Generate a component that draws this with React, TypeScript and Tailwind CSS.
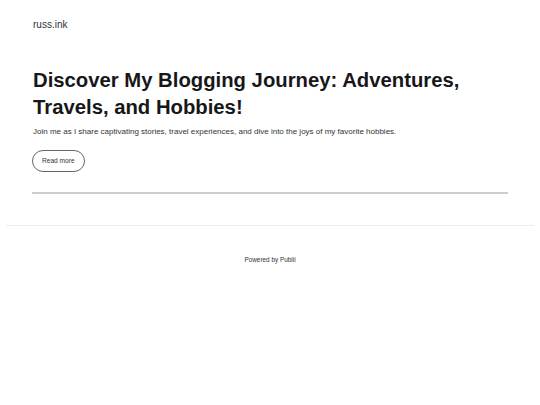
import React from 'react'

export default function App() {
  return (
    <div className="min-h-[405px] bg-white text-[#1d1d1f] font-['Liberation_Sans',Arial,sans-serif]">
      <header className="px-[33px] pt-[11px]">
        <a href="#" className="text-[10px] leading-[12px] text-[#333]">russ.ink</a>
      </header>

      <main className="px-[32px] pt-[32px]">
        <article>
          <h1 className="text-[20.3px] leading-[27px] font-bold text-[#17171a] pl-px">
            Discover My Blogging Journey: Adventures,
            <br />
            Travels, and Hobbies!
          </h1>
          <p className="mt-[6px] pl-px text-[8px] leading-[10px] text-[#333]">
            Join me as I share captivating stories, travel experiences, and dive into the joys of my favorite hobbies.
          </p>
          <button className="mt-[13px] h-[22px] px-[9px] rounded-full border border-[#666] text-[6.6px] text-[#333] bg-white">
            Read more
          </button>
        </article>
        <hr className="mt-[20px] border-0 h-[2px] bg-[#cccccc]" />
      </main>

      <footer className="mx-[6px] mt-[31px] border-t border-[#eeeeee] pt-[19px] text-center">
        <span className="text-[6.4px] text-[#333]">Powered by Publii</span>
      </footer>
    </div>
  )
}
